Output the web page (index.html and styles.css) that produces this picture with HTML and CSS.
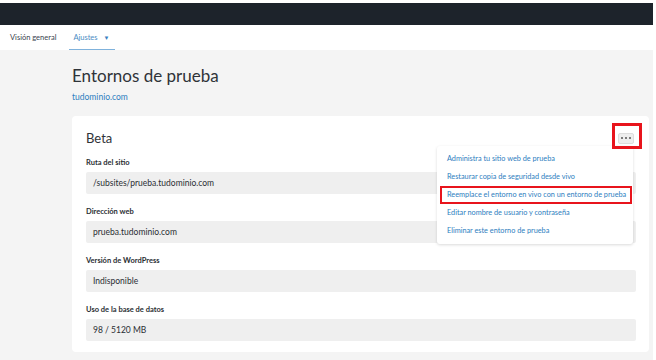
FILE: index.html
```html
<!DOCTYPE html>
<html lang="es">
<head>
    <meta charset="UTF-8">
    <meta name="viewport" content="width=device-width, initial-scale=1.0">
    <title>Entornos de prueba</title>
    <link rel="stylesheet" href="styles.css">
</head>
<body>
    <div class="topbar"></div>
    <nav class="tabs">
        <a class="tab">Visión general</a>
        <a class="tab active">Ajustes <span class="caret">&#9660;</span></a>
    </nav>
    <main class="main">
        <h1>Entornos de prueba</h1>
        <a class="domain">tudominio.com</a>

        <section class="card">
            <div class="card-head">
                <h2>Beta</h2>
                <button class="more"><span></span><span></span><span></span></button>
            </div>

            <div class="field">
                <div class="label">Ruta del sitio</div>
                <div class="value">/subsites/prueba.tudominio.com</div>
            </div>
            <div class="field">
                <div class="label">Dirección web</div>
                <div class="value">prueba.tudominio.com</div>
            </div>
            <div class="field">
                <div class="label">Versión de WordPress</div>
                <div class="value">Indisponible</div>
            </div>
            <div class="field">
                <div class="label">Uso de la base de datos</div>
                <div class="value">98 / 5120 MB</div>
            </div>

            <ul class="menu">
                <li>Administra tu sitio web de prueba</li>
                <li>Restaurar copia de seguridad desde vivo</li>
                <li class="marked">Reemplace el entorno en vivo con un entorno de prueba</li>
                <li>Editar nombre de usuario y contraseña</li>
                <li>Eliminar este entorno de prueba</li>
            </ul>
            <div class="mark-btn"></div>
        </section>
    </main>
</body>
</html>
```

FILE: styles.css
```css
body{
    margin: 0;
    background: #fff;
    font-family: Lato, "Open Sans", sans-serif;
    color: #333;
    height: 360px;
    overflow: hidden;
}
.topbar{
    height: 22px;
    margin: 3px 3px 0 0;
    background: #1d232b;
}
.tabs{
    display: flex;
    height: 25px;
    padding-left: 10px;
    gap: 13px;
    font-size: 7.5px;
}
.tab{
    display: flex;
    align-items: center;
    color: #3a4450;
}
.tab.active{
    color: #4a8cc4;
    border-bottom: 1px solid #7fb2dc;
    padding: 1px 5px 0 4px;
}
.caret{
    font-size: 6px;
    margin-left: 6px;
    color: #3a7fc0;
}
.main{
    background: #f4f4f4;
    margin-right: 3px;
    padding: 15px 0 0 72px;
    height: 310px;
    box-sizing: border-box;
}
h1{
    margin: 0;
    font-weight: 400;
    font-size: 17px;
    line-height: 22px;
    color: #2f3338;
}
.domain{
    display: block;
    margin-top: 4px;
    font-size: 8.5px;
    line-height: 12px;
    color: #2d7ec0;
}
.card{
    position: relative;
    margin-top: 13px;
    width: 577px;
    height: 236px;
    box-sizing: border-box;
    background: #fff;
    border-radius: 4px;
    padding: 10px 13px 13px 14px;
}
.card-head{
    display: flex;
    justify-content: space-between;
    align-items: center;
    height: 24px;
    margin-bottom: 8px;
}
h2{
    margin: 0;
    font-weight: 400;
    font-size: 13px;
    color: #2f3338;
}
.more{
    display: flex;
    gap: 2px;
    align-items: center;
    justify-content: center;
    width: 16px;
    height: 11px;
    padding: 0;
    margin-right: 2px;
    background: #eee;
    border: 1px solid #ddd;
    border-radius: 2px;
}
.more span{
    width: 2px;
    height: 2px;
    border-radius: 50%;
    background: #555;
}
.field{
    margin-bottom: 13px;
}
.label{
    font-size: 7.5px;
    font-weight: 700;
    line-height: 10px;
    color: #2a2e33;
    margin-bottom: 4px;
}
.value{
    height: 22px;
    line-height: 22px;
    background: #efefef;
    border-radius: 2px;
    padding-left: 7px;
    font-size: 8.5px;
    color: #2a2e33;
}
.menu{
    position: absolute;
    left: 365px;
    top: 30px;
    width: 196px;
    margin: 0;
    padding: 4px 0;
    list-style: none;
    background: #fff;
    border-radius: 3px;
    box-shadow: 0 1px 3px rgba(0,0,0,0.15);
    box-sizing: border-box;
}
.menu li{
    height: 18px;
    line-height: 18px;
    padding-left: 10px;
    font-size: 7.3px;
    color: #2d7ec0;
    white-space: nowrap;
}
.menu li.marked{
    margin: 0 1px 0 3px;
    padding-left: 5px;
    line-height: 14px;
    height: 14px;
    border: 2px solid #e8141c;
}
.mark-btn{
    position: absolute;
    left: 540px;
    top: 7px;
    width: 24px;
    height: 20px;
    border: 3px solid #e8141c;
}
```
